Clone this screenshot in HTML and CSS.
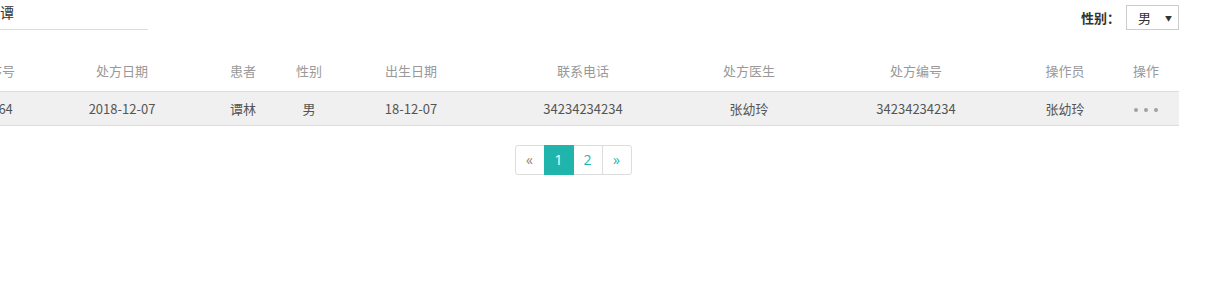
FILE: index.html
```html
<!DOCTYPE html>
<html lang="zh-CN">
<head>
<meta charset="utf-8">
<title>处方列表</title>
<link rel="stylesheet" href="styles.css">
</head>
<body>
<div class="page">
  <div class="toolbar">
    <div class="search">
      <input class="search-input" type="text" value="谭">
    </div>
    <div class="filter">
      <span class="filter-label">性别：</span>
      <div class="select">
        <span class="select-value">男</span>
        <span class="select-arrow">▼</span>
      </div>
    </div>
  </div>

  <table class="grid">
    <colgroup>
      <col class="c0"><col class="c1"><col class="c2"><col class="c3"><col class="c4">
      <col class="c5"><col class="c6"><col class="c7"><col class="c8"><col class="c9">
    </colgroup>
    <thead>
      <tr>
        <th>序号</th>
        <th>处方日期</th>
        <th>患者</th>
        <th>性别</th>
        <th>出生日期</th>
        <th>联系电话</th>
        <th>处方医生</th>
        <th>处方编号</th>
        <th>操作员</th>
        <th>操作</th>
      </tr>
    </thead>
    <tbody>
      <tr>
        <td>164</td>
        <td>2018-12-07</td>
        <td>谭林</td>
        <td>男</td>
        <td>18-12-07</td>
        <td>34234234234</td>
        <td>张幼玲</td>
        <td>34234234234</td>
        <td>张幼玲</td>
        <td><span class="dots"><i></i><i></i><i></i></span></td>
      </tr>
    </tbody>
  </table>

  <ul class="pager">
    <li><a class="prev">«</a></li>
    <li><a class="active">1</a></li>
    <li><a>2</a></li>
    <li><a>»</a></li>
  </ul>
</div>
</body>
</html>
```

FILE: styles.css
```css
* { box-sizing: border-box; }

body {
  margin: 0;
  background: #fff;
  font-family: "Noto Sans CJK SC", "Open Sans", sans-serif;
  font-size: 13px;
  color: #555;
}

.page {
  width: 1212px;
  margin-left: -33px;
}

.toolbar {
  display: flex;
  justify-content: space-between;
  align-items: flex-start;
  height: 30px;
}

.search {
  padding-left: 33px;
}

.search-input {
  display: block;
  width: 148px;
  height: 30px;
  margin: 0;
  padding: 0 0 5px 0;
  border: 0;
  border-bottom: 1px solid #ddd;
  outline: none;
  font-family: "Noto Sans CJK SC", sans-serif;
  font-size: 14px;
  color: #333;
  background: transparent;
}

.filter {
  display: flex;
  align-items: center;
  padding-top: 5px;
}

.filter-label {
  font-weight: bold;
  color: #333;
  font-size: 13px;
  margin-right: 6px;
}

.select {
  display: flex;
  align-items: center;
  justify-content: space-between;
  width: 53px;
  height: 25px;
  border: 1px solid #ccc;
  padding: 0 6px 0 11px;
  color: #333;
  font-size: 13px;
}

.select-arrow {
  font-size: 7px;
  color: #333;
}

.grid {
  width: 1212px;
  margin-top: 22px;
  border-collapse: collapse;
  table-layout: fixed;
}

.c0 { width: 70px; }
.c1 { width: 170px; }
.c2 { width: 72px; }
.c3 { width: 60px; }
.c4 { width: 144px; }
.c5 { width: 200px; }
.c6 { width: 132px; }
.c7 { width: 202px; }
.c8 { width: 96px; }
.c9 { width: 66px; }

.grid th {
  height: 39px;
  padding: 0 0 1px;
  font-weight: normal;
  color: #999;
  text-align: center;
  border-bottom: 1px solid #ddd;
}

.grid td {
  height: 34px;
  padding: 0;
  text-align: center;
  background: #f0f0f0;
  border-bottom: 1px solid #ddd;
  color: #555;
}

.dots {
  display: inline-flex;
  gap: 6px;
  vertical-align: middle;
}

.dots i {
  display: block;
  width: 4px;
  height: 4px;
  border-radius: 50%;
  background: #a0a0a0;
}

.pager {
  display: flex;
  justify-content: center;
  list-style: none;
  margin: 19px 0 0;
  padding: 0;
}

.pager li a {
  display: flex;
  align-items: center;
  justify-content: center;
  width: 30px;
  height: 30px;
  margin-left: -1px;
  border: 1px solid #ddd;
  color: #1fb5ad;
  font-family: "Open Sans", sans-serif;
  font-size: 14px;
  background: #fff;
}

.pager li:first-child a {
  margin-left: 0;
  border-radius: 3px 0 0 3px;
  color: #a8806a;
}

.pager li:last-child a {
  border-radius: 0 3px 3px 0;
}

.pager li a.active {
  background: #1fb5ad;
  border-color: #1fb5ad;
  color: #fff;
  position: relative;
}
```
